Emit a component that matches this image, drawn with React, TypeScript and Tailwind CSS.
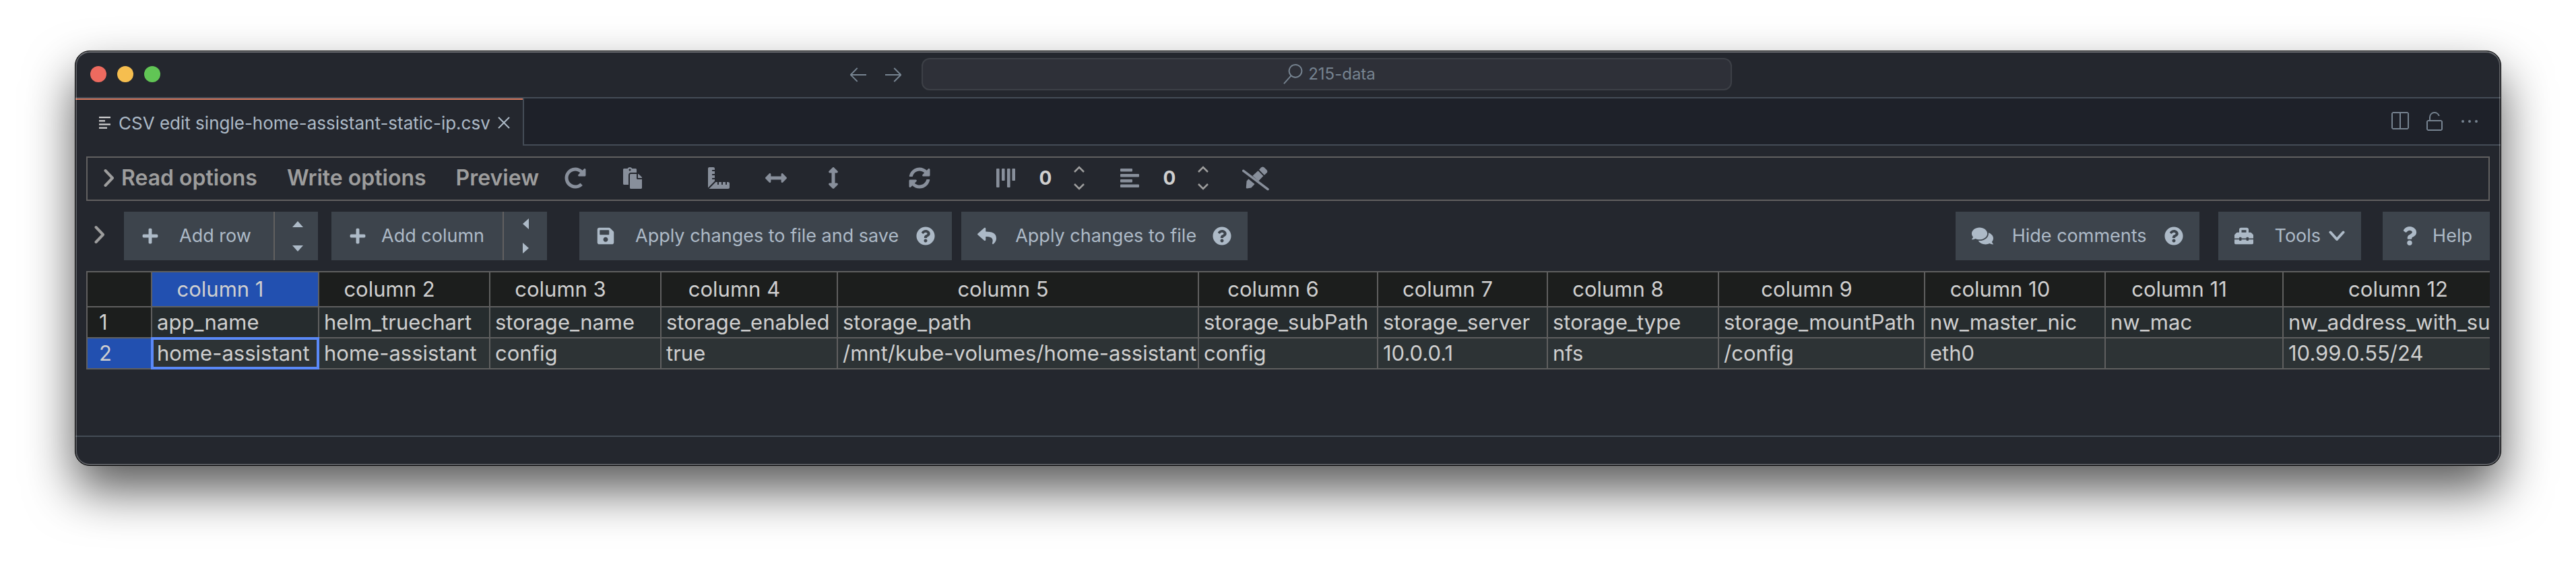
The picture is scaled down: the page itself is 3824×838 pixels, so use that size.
import React from "react";
import {
  FaArrowsAltH,
  FaArrowsAltV,
  FaComments,
  FaPaste,
  FaPlus,
  FaQuestion,
  FaQuestionCircle,
  FaRedoAlt,
  FaReply,
  FaRulerCombined,
  FaSave,
  FaSyncAlt,
  FaToolbox,
} from "react-icons/fa";
import {
  VscArrowLeft,
  VscArrowRight,
  VscClose,
  VscEllipsis,
  VscSearch,
  VscSplitHorizontal,
  VscUnlock,
} from "react-icons/vsc";

const columns = [
  { width: "w-[248px]", values: ["app_name", "home-assistant"] },
  { width: "w-[254px]", values: ["helm_truechart", "home-assistant"] },
  { width: "w-[254px]", values: ["storage_name", "config"] },
  { width: "w-[262px]", values: ["storage_enabled", "true"] },
  { width: "w-[536px]", values: ["storage_path", "/mnt/kube-volumes/home-assistant"] },
  { width: "w-[266px]", values: ["storage_subPath", "config"] },
  { width: "w-[252px]", values: ["storage_server", "10.0.0.1"] },
  { width: "w-[254px]", values: ["storage_type", "nfs"] },
  { width: "w-[306px]", values: ["storage_mountPath", "/config"] },
  { width: "w-[268px]", values: ["nw_master_nic", "eth0"] },
  { width: "w-[264px]", values: ["nw_mac", ""] },
  { width: "w-[386px]", values: ["nw_address_with_subnet", "10.99.0.55/24"] },
];

const rows = [0, 1];
const selected = { row: 1, column: 0 };

function ChevronRight() {
  return (
    <svg width="16" height="28" viewBox="0 0 16 28" fill="none" stroke="#9d9d9d" strokeWidth="4" strokeLinecap="round" strokeLinejoin="round">
      <path d="M2.5 3 13 14 2.5 25" />
    </svg>
  );
}

function ChevronDown() {
  return (
    <svg width="24" height="16" viewBox="0 0 24 16" fill="none" stroke="currentColor" strokeWidth="4" strokeLinecap="round" strokeLinejoin="round">
      <path d="M2.5 2.5 12 13 21.5 2.5" />
    </svg>
  );
}

function StepChevron({ up }: { up?: boolean }) {
  return (
    <svg width="16" height="10" viewBox="0 0 16 10" fill="none" stroke="#9d9d9d" strokeWidth="2.6">
      <path d={up ? "M1 9 8 2l7 7" : "M1 1l7 7 7-7"} />
    </svg>
  );
}

function FixedColumnsIcon() {
  return (
    <svg width="28" height="28" viewBox="0 0 28 28" fill="currentColor">
      <rect x="0" y="0" width="4.6" height="28" rx="1" />
      <rect x="8" y="0" width="4.6" height="18" rx="1" />
      <rect x="16" y="0" width="4.6" height="28" rx="1" />
      <rect x="23.4" y="0" width="4.6" height="18" rx="1" />
    </svg>
  );
}

function FixedRowsIcon() {
  return (
    <svg width="28" height="28" viewBox="0 0 28 28" fill="currentColor">
      <rect x="0" y="0" width="18" height="4.6" rx="1" />
      <rect x="0" y="8" width="28" height="4.6" rx="1" />
      <rect x="0" y="16" width="18" height="4.6" rx="1" />
      <rect x="0" y="23.4" width="28" height="4.6" rx="1" />
    </svg>
  );
}

function PenSlashIcon() {
  return (
    <svg width="40" height="38" viewBox="0 0 40 38" fill="currentColor">
      <path d="M6.6 23.4 9.4 20.6 18.6 28 13.4 33.4 7.2 34.4Q5.6 34.6 5.8 33Z" />
      <path d="M15.4 15.8 23.6 8.2 31.4 16 24.2 23.4Z" />
      <path d="M25 6.8 28 3.6Q30.4 1.6 32.8 3.6L36.4 7Q38.4 9.4 36.4 11.6L32.8 14.8Z" />
      <path d="M1.8 8.4 38 35.6" stroke="currentColor" strokeWidth="3.6" strokeLinecap="round" />
    </svg>
  );
}

function FileLinesIcon() {
  return (
    <svg width="17" height="18" viewBox="0 0 17 18" fill="#d4d4d4">
      <rect x="0" y="0" width="17" height="2.2" />
      <rect x="0" y="5.2" width="9" height="2.2" />
      <rect x="0" y="10.4" width="17" height="2.2" />
      <rect x="0" y="15.6" width="12" height="2.2" />
    </svg>
  );
}

function TitleBar() {
  return (
    <header className="flex h-[70px] items-center border-b-2 border-[#444c56] px-[22px] text-[#768390]">
      <div className="flex flex-1 gap-4">
        <button aria-label="Close window" className="size-6 rounded-full bg-[#ed6a5f]" />
        <button aria-label="Minimise window" className="size-6 rounded-full bg-[#f6be4f]" />
        <button aria-label="Zoom window" className="size-6 rounded-full bg-[#61c555]" />
      </div>
      <div className="ml-1 flex w-[1313px] items-center">
        <button aria-label="Back">
          <VscArrowLeft size={32} />
        </button>
        <button aria-label="Forward" className="ml-5">
          <VscArrowRight size={32} />
        </button>
        <button className="ml-[26px] flex h-12 flex-1 items-center justify-center gap-2 rounded-xl border-2 border-[#3d4047] bg-[#2e3038] pl-2 text-[24px]">
          <VscSearch size={30} />
          215-data
        </button>
      </div>
      <div className="flex-1" />
    </header>
  );
}

function TabBar() {
  return (
    <nav className="flex h-[70px]">
      <div className="flex items-center border-t-2 border-[#d9795f] pr-3 pl-[35px] text-[26px] text-[#adbac7]">
        <FileLinesIcon />
        <a href="#csv" className="ml-3 whitespace-nowrap">
          CSV edit single-home-assistant-static-ip.csv
        </a>
        <button aria-label="Close tab" className="ml-1">
          <VscClose size={32} />
        </button>
      </div>
      <div className="flex flex-1 items-center justify-end gap-5 border-b-2 border-l-2 border-[#444c56] bg-[#1e2129] pr-[30px] text-[#768390]">
        <button aria-label="Split editor">
          <VscSplitHorizontal size={32} />
        </button>
        <button aria-label="Unlock">
          <VscUnlock size={32} />
        </button>
        <button aria-label="More actions">
          <VscEllipsis size={32} />
        </button>
      </div>
    </nav>
  );
}

function Stepper({ label }: { label: string }) {
  return (
    <>
      <input
        aria-label={label}
        defaultValue="0"
        className="ml-[33px] w-6 bg-transparent text-center text-[28px] font-bold text-[#cfcfcf] outline-none"
      />
      <div className="ml-[30px] flex flex-col gap-4">
        <button aria-label={label + " up"}>
          <StepChevron up />
        </button>
        <button aria-label={label + " down"}>
          <StepChevron />
        </button>
      </div>
    </>
  );
}

function OptionsBar() {
  return (
    <section className="flex h-[66px] items-center border-2 border-[#616060] pb-[3px] pl-6 text-[32px] font-semibold whitespace-nowrap text-[#9d9d9d]">
      <button className="flex items-center gap-[10px]">
        <ChevronRight />
        Read options
      </button>
      <button className="ml-11">Write options</button>
      <button className="ml-11">Preview</button>
      <div className="flex items-center text-[#888f9b]">
        <button aria-label="Refresh preview" className="ml-[38px]">
          <FaRedoAlt size={32} />
        </button>
        <button aria-label="Paste" className="ml-[53px]">
          <FaPaste size={32} />
        </button>
        <button aria-label="Reset sizes" className="ml-24">
          <FaRulerCombined size={32} />
        </button>
        <button aria-label="Fit widths" className="ml-[53px]">
          <FaArrowsAltH size={32} />
        </button>
        <button aria-label="Fit heights" className="ml-[53px]">
          <FaArrowsAltV size={32} />
        </button>
        <button aria-label="Reload file" className="ml-24">
          <FaSyncAlt size={32} />
        </button>
        <span className="ml-[98px]">
          <FixedColumnsIcon />
        </span>
        <Stepper label="Fixed columns" />
        <span className="ml-[53px]">
          <FixedRowsIcon />
        </span>
        <Stepper label="Fixed rows" />
        <button aria-label="Read only" className="ml-[50px]">
          <PenSlashIcon />
        </button>
      </div>
    </section>
  );
}

function Triangle({ points, width, height }: { points: string; width: number; height: number }) {
  return (
    <svg width={width} height={height} fill="currentColor">
      <polygon points={points} />
    </svg>
  );
}

function ActionBar() {
  return (
    <section className="mt-4 flex h-[72px] items-stretch pl-3 text-[27px] whitespace-nowrap text-[#adbac7]">
      <button aria-label="Expand" className="mr-7 pb-1">
        <ChevronRight />
      </button>

      <button className="flex w-[224px] items-center gap-[30px] border-r-2 border-[#616060] bg-[#3d444c] pl-[26px]">
        <FaPlus size={26} />
        Add row
      </button>
      <div className="flex w-16 flex-col items-center justify-center gap-[27px] bg-[#3d444c] pl-1">
        <button aria-label="Insert above">
          <Triangle points="0,9 8,0 16,9" width={16} height={9} />
        </button>
        <button aria-label="Insert below">
          <Triangle points="0,0 16,0 8,9" width={16} height={9} />
        </button>
      </div>

      <button className="ml-5 flex w-[256px] items-center gap-[22px] border-r-2 border-[#616060] bg-[#3d444c] pl-[26px]">
        <FaPlus size={26} />
        Add column
      </button>
      <div className="flex w-16 flex-col items-center justify-center gap-5 bg-[#3d444c]">
        <button aria-label="Insert left">
          <Triangle points="9,0 9,16 0,8" width={9} height={16} />
        </button>
        <button aria-label="Insert right">
          <Triangle points="0,0 9,8 0,16" width={9} height={16} />
        </button>
      </div>

      <button className="ml-12 flex items-center bg-[#3d444c] px-[25px]">
        <FaSave size={28} />
        <span className="mr-[26px] ml-[30px]">Apply changes to file and save</span>
        <FaQuestionCircle size={28} />
      </button>
      <button className="ml-[14px] flex items-center bg-[#3d444c] px-6">
        <FaReply size={28} />
        <span className="mr-6 ml-7">Apply changes to file</span>
        <FaQuestionCircle size={28} />
      </button>

      <div className="flex-1" />

      <button className="flex items-center bg-[#3d444c] px-6">
        <FaComments size={32} />
        <span className="mr-[26px] ml-7">Hide comments</span>
        <FaQuestionCircle size={28} />
      </button>
      <button className="ml-7 flex items-center bg-[#3d444c] px-6">
        <FaToolbox size={28} />
        <span className="mr-3 ml-8">Tools</span>
        <ChevronDown />
      </button>
      <button className="ml-8 flex items-center bg-[#3d444c] px-[26px]">
        <FaQuestion size={28} />
        <span className="ml-5">Help</span>
      </button>
    </section>
  );
}

function DataTable() {
  return (
    <div className="mt-4 overflow-hidden">
      <table className="w-max border-separate border-spacing-0 border-t-2 border-l-2 border-[#5f5f5f] text-left text-[31px] leading-9 whitespace-nowrap text-[#cfcfcf]">
        <thead>
          <tr className="h-[52px] bg-[#1c1e1d]">
            <th aria-label="Row" className="w-24 min-w-24 border-r-2 border-b-2 border-[#5f5f5f] p-0" />
            {columns.map((column, index) => (
              <th
                key={index}
                className={
                  "border-r-2 border-b-2 border-[#5f5f5f] py-0 pr-11 pl-0 text-center font-normal " +
                  column.width +
                  (index === selected.column ? " bg-[#2250b0]" : "")
                }
              >
                column {index + 1}
              </th>
            ))}
          </tr>
        </thead>
        <tbody>
          {rows.map((row) => (
            <tr key={row} className={row === 0 ? "h-[46px] bg-[#262c2e]" : "h-[46px] bg-[#2d3335]"}>
              <th
                className={
                  "border-r-2 border-b-2 border-[#5f5f5f] py-0 pr-0 pl-[17px] font-normal " +
                  (row === selected.row ? "bg-[#2250b0]" : "bg-[#1c1e1d]")
                }
              >
                {row + 1}
              </th>
              {columns.map((column, index) => (
                <td key={index} className="relative border-r-2 border-b-2 border-[#5f5f5f] py-0 pr-0 pl-[7px]">
                  {column.values[row]}
                  {row === selected.row && index === selected.column && (
                    <span className="pointer-events-none absolute -inset-[2px] border-4 border-[#5a89f8]" />
                  )}
                </td>
              ))}
            </tr>
          ))}
        </tbody>
      </table>
    </div>
  );
}

export default function App() {
  return (
    <div className="min-h-screen bg-white px-[111px] pt-[75px] pb-[147px] font-['Inter',sans-serif]">
      <div className="relative overflow-hidden rounded-[22px] border border-black bg-[#24272e] shadow-[0_36px_72px_rgba(0,0,0,0.65)]">
        <TitleBar />
        <TabBar />
        <main className="px-4 pt-4 pb-[98px]">
          <OptionsBar />
          <ActionBar />
          <DataTable />
        </main>
        <footer className="h-11 border-t-2 border-[#444c56]" />
        <div className="pointer-events-none absolute inset-0 rounded-[21px] border-2 border-white/25 border-t-white/35" />
      </div>
    </div>
  );
}
